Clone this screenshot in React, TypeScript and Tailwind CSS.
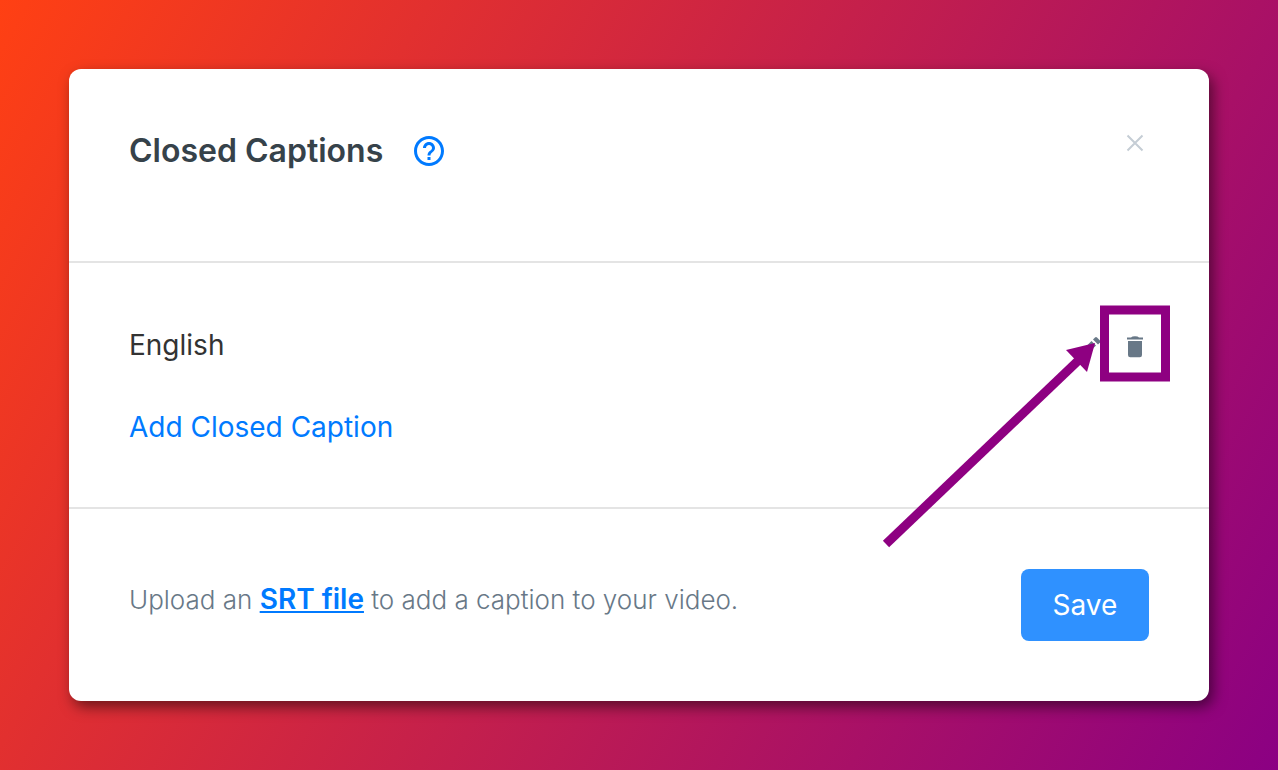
import React from "react";

function HelpIcon() {
  return (
    <svg viewBox="0 0 24 24" className="size-9" fill="currentColor" aria-hidden="true">
      <path d="M11 18h2v-2h-2v2zm1-16C6.48 2 2 6.48 2 12s4.480 10 10 10 10-4.480 10-10S17.520 2 12 2zm0 18c-4.410 0-8-3.590-8-8s3.590-8 8-8 8 3.590 8 8-3.590 8-8 8zm0-14c-2.210 0-4 1.790-4 4h2c0-1.100.9-2 2-2s2 .9 2 2c0 2-3 1.750-3 5h2c0-2.250 3-2.500 3-5 0-2.210-1.790-4-4-4z" />
    </svg>
  );
}

function CloseIcon() {
  return (
    <svg viewBox="0 0 28 28" className="size-7" fill="none" stroke="currentColor" strokeWidth="2" aria-hidden="true">
      <path d="M6.500 6.500l15 15M21.500 6.500l-15 15" />
    </svg>
  );
}

function PencilIcon() {
  return (
    <svg viewBox="0 0 28 28" className="size-7" fill="currentColor" aria-hidden="true">
      <path d="M14.500 10l4.500 4.500L8.500 25l-5.500 1 1-5.500z" />
      <path d="M16 8.500l2-2q1-1 2 0l3 3q1 1 0 2l-2 2z" />
    </svg>
  );
}

function TrashIcon() {
  return (
    <svg viewBox="0 0 28 28" className="size-7" fill="currentColor" aria-hidden="true">
      <path d="M6 6.500h4q1-1.200 4-1.200t4 1.200h4v2H6z" />
      <path d="M7 10h14v14q0 2.200-2.200 2.200h-9.600Q7 26.200 7 24z" />
    </svg>
  );
}

function Callout() {
  return (
    <svg viewBox="0 0 300 250" className="pointer-events-none absolute -top-[21px] -right-6 w-[300px] max-w-none" fill="none" aria-hidden="true">
      <path d="M13 241L209 54" stroke="#8e0081" strokeWidth="9" />
      <path d="M222 40L193 47L214 69Z" fill="#8e0081" />
      <rect x="231.500" y="7" width="61" height="67" stroke="#8e0081" strokeWidth="9" />
    </svg>
  );
}

export default function App() {
  return (
    <main className="min-h-screen bg-[linear-gradient(120deg,#ff4013,#8b0083)] p-[69px] font-['Inter',sans-serif]">
      <section role="dialog" aria-labelledby="title" className="rounded-xl bg-white shadow-[4px_6px_14px_rgba(0,0,0,0.5)]">
        <header className="flex min-h-[194px] items-start justify-between border-b-2 border-[#e4e4e4] p-[60px]">
          <div className="flex items-center gap-7">
            <h1 id="title" className="text-[32px] leading-[44px] font-semibold text-[#36424a]">Closed Captions</h1>
            <button type="button" aria-label="Help" className="text-[#007aff]"><HelpIcon /></button>
          </div>
          <button type="button" aria-label="Close" className="text-[#c5cdd5]"><CloseIcon /></button>
        </header>
        <div className="flex flex-col gap-10 border-b-2 border-[#e4e4e4] px-[60px] pt-[61px] pb-[59px]">
          <div className="relative flex h-[42px] items-center justify-between">
            <span className="text-[28px] text-[#333333]">English</span>
            <div className="flex items-center gap-4 text-[#687887]">
              <button type="button" aria-label="Edit English"><PencilIcon /></button>
              <button type="button" aria-label="Delete English"><TrashIcon /></button>
            </div>
            <Callout />
          </div>
          <button type="button" className="h-[42px] self-start text-[28px] text-[#007aff]">Add Closed Caption</button>
        </div>
        <footer className="flex items-start justify-between p-[60px]">
          <p className="text-[26px] leading-[60px] font-light text-[#687887]">
            Upload an <a href="#srt" className="text-[28px] font-semibold text-[#007aff] underline decoration-2 underline-offset-2">SRT file</a> to add a caption to your video.
          </p>
          <button type="button" className="h-[72px] w-32 rounded-lg bg-[#2f91ff] text-[28px] text-white">Save</button>
        </footer>
      </section>
    </main>
  );
}
